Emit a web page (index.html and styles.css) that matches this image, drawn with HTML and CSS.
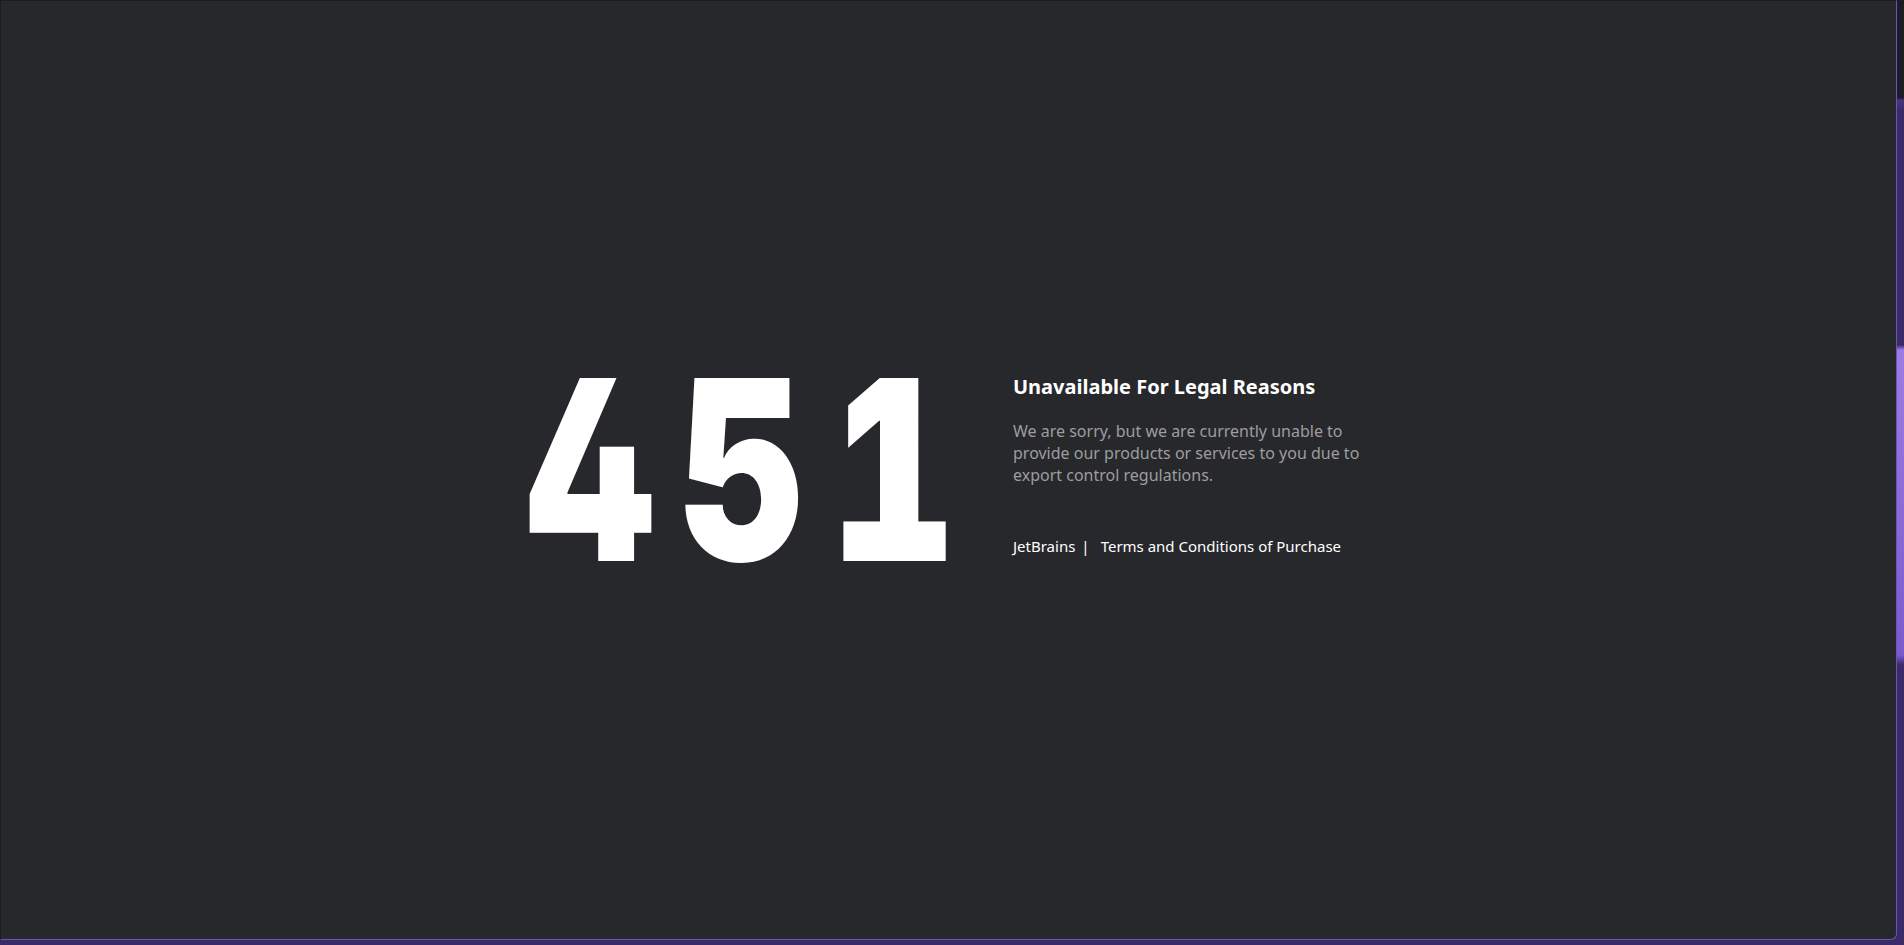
FILE: index.html
```html
<!DOCTYPE html>
<html lang="en">
<head>
<meta charset="utf-8">
<title>451 Unavailable For Legal Reasons</title>
<link rel="stylesheet" href="styles.css">
</head>
<body>
<div class="panel">
  <main class="content">
    <div class="code-box"><div class="code">451</div></div>
    <div class="info">
      <h1 class="title">Unavailable For Legal Reasons</h1>
      <p class="desc">We are sorry, but we are currently unable to provide our products or services to you due to export control regulations.</p>
      <nav class="links">
        <a href="#" class="link">JetBrains</a>
        <span class="sep">|</span>
        <a href="#" class="link">Terms and Conditions of Purchase</a>
      </nav>
    </div>
  </main>
</div>
</body>
</html>
```

FILE: styles.css
```css
html, body {
  margin: 0;
  padding: 0;
  width: 1904px;
  height: 945px;
  overflow: hidden;
}
body {
  background: linear-gradient(180deg, #1d1b26 0px, #1d1b26 98px, #4a3583 100px, #3b2a68 110px, #3b2a68 345px, #9c7be6 350px, #8d6cd9 500px, #7a5ad0 655px, #3b2a68 665px, #3b2a68 945px);
  font-family: "Noto Sans", "Open Sans", sans-serif;
}
.panel {
  box-sizing: border-box;
  width: 1897px;
  height: 940px;
  background: #27282c;
  border: 1px solid #1b1c1f;
  border-right: 1px solid #6e52b4;
  border-bottom: 1px solid #6e52b4;
  border-bottom-right-radius: 6px;
  display: flex;
  align-items: center;
  justify-content: center;
}
.content {
  display: flex;
  align-items: flex-start;
  gap: 45px;
}
.code-box {
  width: 440px;
  height: 252px;
  padding-left: 4px;
}
.code {
  font-family: "Inter", sans-serif;
  font-weight: 900;
  font-size: 252px;
  line-height: 1;
  color: #ffffff;
  font-variant-numeric: tabular-nums;
  font-feature-settings: "tnum" 1, "cv02" 1;
  letter-spacing: 34px;
  white-space: nowrap;
  transform: scaleX(0.77);
  transform-origin: left top;
}
.info {
  width: 360px;
  padding-top: 29px;
}
.title {
  margin: 0;
  font-size: 20px;
  font-weight: 700;
  color: #ffffff;
  line-height: 28px;
}
.desc {
  margin: 19px 0 0;
  font-size: 16px;
  line-height: 22px;
  color: #9d9d9f;
}
.links {
  margin-top: 50px;
  font-size: 15px;
  line-height: 20px;
  color: #ffffff;
  display: flex;
}
.link {
  color: #ffffff;
  text-decoration: none;
}
.sep {
  margin: 0 11px 0 6px;
}
```
